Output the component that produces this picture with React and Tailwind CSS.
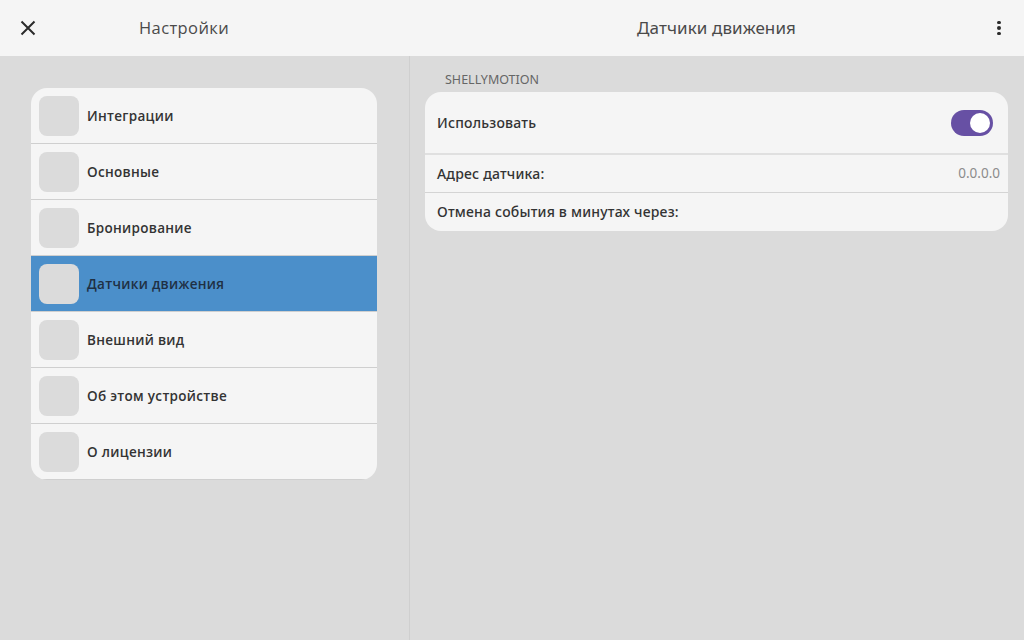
const items = [
  "Интеграции",
  "Основные",
  "Бронирование",
  "Датчики движения",
  "Внешний вид",
  "Об этом устройстве",
  "О лицензии",
];

const App = () => {
  return (
    <div className="w-[1024px] h-[640px] flex flex-col bg-[#dbdbdb] overflow-hidden font-['Open_Sans',sans-serif]">
      {/* Header */}
      <div className="h-14 flex shrink-0 bg-[#f5f5f5] text-[#4a4a4a]">
        <div className="w-[410px] flex items-center">
          <button className="w-14 h-14 flex items-center justify-center">
            <svg width="16" height="16" viewBox="0 0 16 16" fill="none" stroke="#2b2b2b" strokeWidth="2">
              <path d="M1.5 1.5l13 13M14.5 1.5l-13 13" />
            </svg>
          </button>
          <div className="ml-[83px] text-[16.5px] tracking-[0.4px]">Настройки</div>
        </div>
        <div className="flex-1 flex items-center justify-center pl-[49px] text-[17px] tracking-[0.1px] font-['Noto_Sans',sans-serif]">
          Датчики движения
        </div>
        <div className="w-[50px] flex flex-col items-center justify-center gap-[2px]">
          <span className="w-[3.5px] h-[3.5px] rounded-full bg-[#2b2b2b]"></span>
          <span className="w-[3.5px] h-[3.5px] rounded-full bg-[#2b2b2b]"></span>
          <span className="w-[3.5px] h-[3.5px] rounded-full bg-[#2b2b2b]"></span>
        </div>
      </div>

      <div className="flex flex-1">
        {/* Menu */}
        <div className="w-[410px] border-r border-[#cfcfcf] pt-8 pl-[31px]">
          <div className="w-[346px] rounded-2xl overflow-hidden bg-[#f5f5f5]">
            {items.map((name, i) => (
              <div
                key={name}
                className={`h-14 flex items-center pl-2 gap-2 border-b border-[#cfcfcf] ${
                  i === 3 ? "bg-[#4b8fca] text-[#1f3044]" : "text-[#333333]"
                }`}
              >
                <div className="w-10 h-10 rounded-lg bg-[#dbdbdb]"></div>
                <span className="text-[13.5px] leading-5 pt-[1px] font-semibold tracking-[0.3px]">{name}</span>
              </div>
            ))}
          </div>
        </div>

        {/* Details */}
        <div className="flex-1 pl-[15px] pr-4 font-['Noto_Sans',sans-serif]">
          <div className="pl-5 h-9 pt-4 text-[12.5px] leading-[16px] text-[#666666]">SHELLYMOTION</div>
          <div className="rounded-2xl bg-[#f5f5f5] text-[#333333] text-[14px] font-medium">
            <div className="h-[63px] flex items-center justify-between pl-3 pr-[15px] border-b-2 border-[#e0e0e0]">
              <span className="tracking-[0.2px]">Использовать</span>
              <div className="w-[42px] h-[26px] rounded-full bg-[#6750a4] flex items-center justify-end pr-[3px]">
                <span className="w-5 h-5 rounded-full bg-white"></span>
              </div>
            </div>
            <div className="h-[38px] flex items-center justify-between pl-3 pr-2 border-b border-[#d4d4d4]">
              <span className="tracking-[0.2px]">Адрес датчика:</span>
              <span className="text-[#8c8c8c] font-normal text-[13.5px]">0.0.0.0</span>
            </div>
            <div className="h-[38px] flex items-center pl-3 pb-[1px]">
              <span className="tracking-[0.2px]">Отмена события в минутах через:</span>
            </div>
          </div>
        </div>
      </div>
    </div>
  );
};

export default App;
